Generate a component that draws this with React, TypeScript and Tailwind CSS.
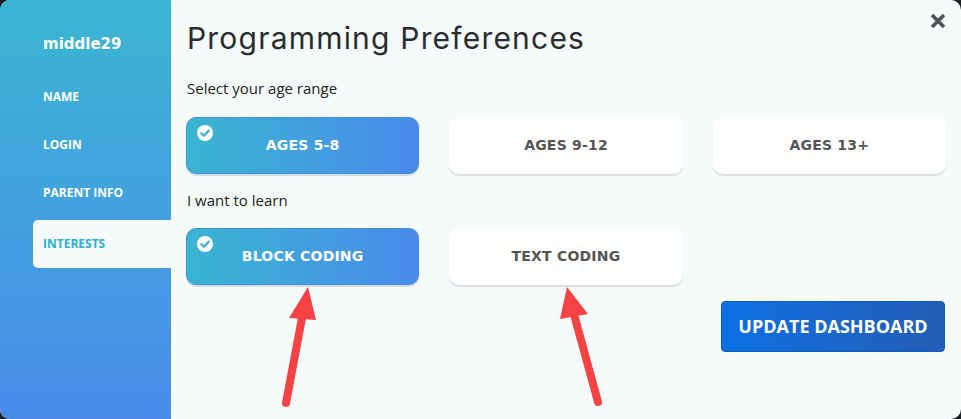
import React, { useState } from 'react';

const ages = ['AGES 5-8', 'AGES 9-12', 'AGES 13+'];
const learn = ['BLOCK CODING', 'TEXT CODING'];

const CheckBadge: React.FC = () => (
  <svg width="16" height="16" viewBox="0 0 16 16" className="absolute left-[10px] top-[7px]">
    <circle cx="8" cy="8" r="8" fill="#ffffff" />
    <path d="M4.3 8.2 L7 10.8 L11.8 5.6" fill="none" stroke="#3aaed6" strokeWidth="2.2" strokeLinecap="round" strokeLinejoin="round" />
  </svg>
);

const Choice: React.FC<{ label: string; selected: boolean; onClick: () => void }> = ({ label, selected, onClick }) => (
  <button
    onClick={onClick}
    className={`relative h-[57px] rounded-[10px] text-[14px] font-bold tracking-[0.2px] ${
      selected
        ? 'bg-gradient-to-r from-[#38b5d0] to-[#4a8aeb] border border-[#3f8fe8] text-white shadow-[0_2px_0_#d5dde2]'
        : 'bg-white text-[#555555] shadow-[0_2px_1px_#d9e0e4]'
    }`}
    style={{ fontFamily: '"DejaVu Sans", "Open Sans", sans-serif' }}
  >
    {selected && <CheckBadge />}
    {label}
  </button>
);

const App: React.FC = () => {
  const [age, setAge] = useState(0);
  const [lang, setLang] = useState(0);

  const navItems = ['NAME', 'LOGIN', 'PARENT INFO'];

  return (
    <div className="w-[961px] h-[419px] bg-[#1a2024] overflow-hidden" style={{ fontFamily: '"Open Sans", sans-serif' }}>
      <div className="relative flex w-full h-full rounded-[10px] overflow-hidden bg-[#f5fafb]">
        {/* Sidebar */}
        <aside className="w-[171px] h-full bg-gradient-to-b from-[#3ab5d2] to-[#4a8bea] flex flex-col pt-[33px]">
          <div className="pl-[43px] text-white text-[15px] font-bold h-[22px] leading-[22px]" style={{ fontFamily: '"DejaVu Sans", sans-serif' }}>
            middle29
          </div>
          <nav className="mt-[33px] flex flex-col">
            {navItems.map(item => (
              <div key={item} className="pl-[43px] h-[48px] leading-[18px] text-white text-[12px] font-bold">
                {item}
              </div>
            ))}
            <div className="ml-[33px] -mt-[12px] h-[48px] rounded-l-[5px] bg-[#f5fafb] pl-[10px] flex items-center text-[#2bb0cf] text-[12px] font-bold">
              INTERESTS
            </div>
          </nav>
        </aside>

        {/* Main */}
        <main className="flex-1 flex flex-col pl-[15px] pr-[15px] pt-[18px]">
          <h1 className="text-[30px] leading-[40px] text-[#2a2d30] tracking-[1.2px] pl-[1px]" style={{ fontFamily: 'Inter, sans-serif', fontWeight: 400 }}>
            Programming Preferences
          </h1>
          <p className="mt-[20px] text-[15px] leading-[20px] text-[#1e1e1e] pl-[1px]">Select your age range</p>
          <div className="mt-[19px] grid grid-cols-3 gap-[30px]">
            {ages.map((a, i) => (
              <Choice key={a} label={a} selected={age === i} onClick={() => setAge(i)} />
            ))}
          </div>
          <p className="mt-[16px] text-[15px] leading-[20px] text-[#1e1e1e] pl-[1px]">I want to learn</p>
          <div className="mt-[18px] grid grid-cols-3 gap-[30px]">
            {learn.map((l, i) => (
              <Choice key={l} label={l} selected={lang === i} onClick={() => setLang(i)} />
            ))}
          </div>
          <div className="mt-[16px] flex justify-end pr-[1px]">
            <button className="w-[224px] h-[51px] rounded-[4px] bg-gradient-to-r from-[#0a70e3] to-[#225db5] border border-[#0c5ec4] text-white text-[18px] font-bold" style={{ fontFamily: '"Open Sans", sans-serif' }}>
              UPDATE DASHBOARD
            </button>
          </div>
        </main>

        {/* Close */}
        <button className="absolute right-[14px] top-[12px] w-[18px] h-[18px]">
          <svg width="18" height="18" viewBox="0 0 18 18">
            <path d="M3 3 L15 15 M15 3 L3 15" stroke="#4f5254" strokeWidth="3.6" strokeLinecap="butt" />
          </svg>
        </button>

        {/* Annotation arrows */}
        <svg className="absolute left-0 top-0 pointer-events-none" width="961" height="419">
          <line x1="286" y1="403" x2="302" y2="318" stroke="#f64145" strokeWidth="8" strokeLinecap="round" />
          <polygon points="308,287 289,318 316,320" fill="#f64145" />
          <line x1="598" y1="402" x2="575" y2="318" stroke="#f64145" strokeWidth="8" strokeLinecap="round" />
          <polygon points="567,287 560,319 588,314" fill="#f64145" />
        </svg>
      </div>
    </div>
  );
};

export default App;
